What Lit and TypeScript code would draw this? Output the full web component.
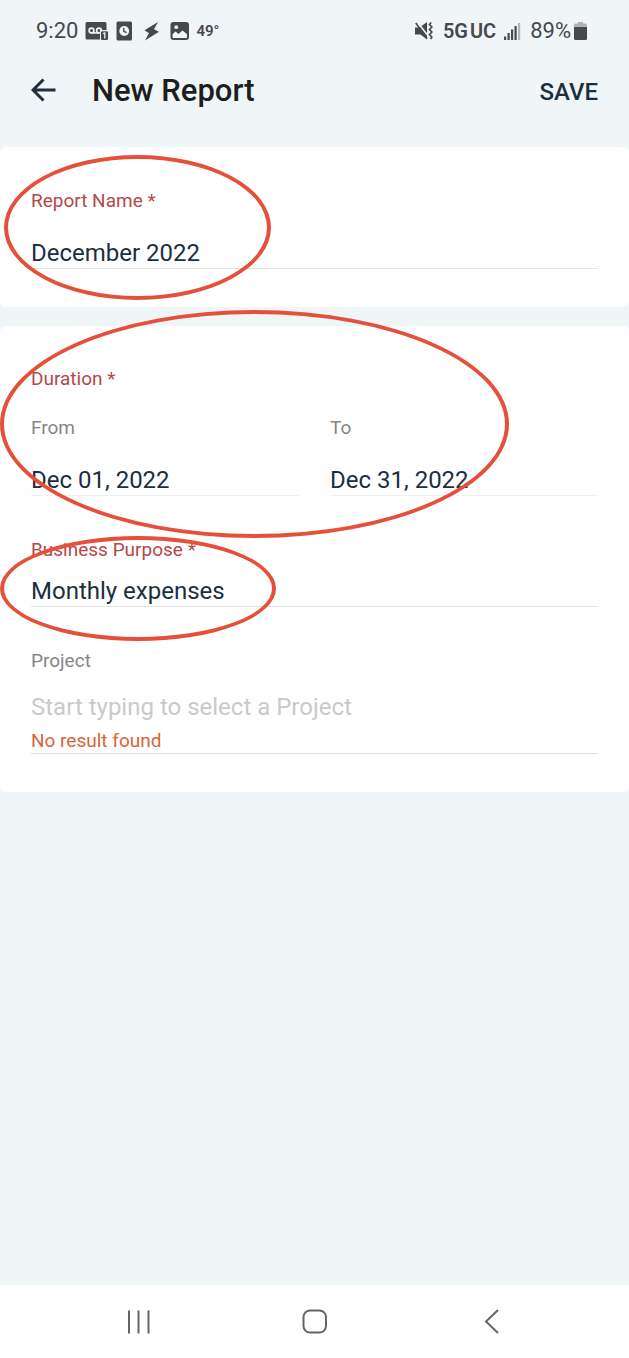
import { LitElement, html, css } from "lit";
import { customElement, state } from "lit/decorators.js";

const base = css`
  *,
  *::before,
  *::after {
    box-sizing: border-box;
  }
  svg {
    display: block;
    flex: none;
  }
  button {
    margin: 0;
    padding: 0;
    border: 0;
    background: none;
    color: inherit;
    font: inherit;
    cursor: pointer;
  }
`;

@customElement("status-bar")
class StatusBar extends LitElement {
  static styles = [
    base,
    css`
      :host {
        display: flex;
        justify-content: space-between;
        align-items: center;
        height: 62px;
        padding: 0 42px 0 36px;
        color: #48494b;
        font-size: 22px;
        line-height: 26px;
      }
      .side {
        display: flex;
        align-items: center;
      }
      .left {
        gap: 7px;
      }
      .right {
        gap: 8px;
      }
      .temp {
        font-size: 15px;
        font-weight: 600;
      }
      .network {
        display: flex;
        gap: 2px;
        font-size: 20px;
        font-weight: 600;
      }
      .battery {
        display: flex;
        align-items: center;
        gap: 3px;
      }
    `,
  ];

  render() {
    return html`
      <div class="side left">
        <span>9:20</span>
        <svg width="24" height="20" viewBox="0 0 24 20" aria-label="Voicemail">
          <path d="M2 1h18A1.500 1.500 0 0 1 21.500 2.500V9H15v9.500H2A1.500 1.500 0 0 1 .5 17V2.500A1.500 1.500 0 0 1 2 1z" fill="#48494b" />
          <g fill="none" stroke="#f0f5f8" stroke-width="1.600">
            <circle cx="6.500" cy="9.500" r="2.400" />
            <path d="M6.500 11.900h7.500" />
            <circle cx="14" cy="9.500" r="2.400" />
          </g>
          <rect x="15.500" y="9.800" width="8" height="9.700" rx="1.500" fill="#48494b" stroke="#f0f5f8" stroke-width="1" />
          <path d="M18 12.700l1.800-.8v5.600" fill="none" stroke="#f0f5f8" stroke-width="1.300" />
        </svg>
        <svg width="16" height="20" viewBox="0 0 16 20" aria-label="Alarm">
          <rect x="0.500" y="0.500" width="15.500" height="19" rx="1.500" fill="#48494b" />
          <circle cx="8.200" cy="10" r="4.900" fill="#f0f5f8" />
          <path d="M7.800 6.800v3.500l2.800 1.300" fill="none" stroke="#48494b" stroke-width="1.400" />
        </svg>
        <svg width="24" height="20" viewBox="0 0 24 20" aria-label="Charging">
          <path d="M19 1L5.500 9.200l4.500 3L6 19.500l14-8.700-5-2.600z" fill="#48494b" />
        </svg>
        <svg width="19" height="20" viewBox="0 0 19 20" aria-label="Picture">
          <rect x="1.500" y="2" width="16.500" height="16" rx="2" fill="none" stroke="#48494b" stroke-width="2" />
          <path d="M1.500 2h16.500v12l-5.500-4.500L8.500 13l-3-2.500-4 3.500z" fill="#48494b" />
          <circle cx="6.200" cy="6.200" r="1.900" fill="#f0f5f8" />
          <path d="M3 14.500l2.600-2 3 2.500 4.400-4.300 4 3.500v2.300H3z" fill="#f0f5f8" />
        </svg>
        <span class="temp">49°</span>
      </div>
      <div class="side right">
        <svg width="20" height="20" viewBox="0 0 20 20" aria-label="Vibrate">
          <path d="M0 6.500h4.500L12 1v17.500L5.500 13.500H0z" fill="#48494b" />
          <path d="M2 0.500L13.500 15.500" stroke="#f0f5f8" stroke-width="1.500" />
          <path d="M0.800 2L12 17.500" stroke="#48494b" stroke-width="1.600" />
          <path d="M16.200 1.500l-1.700 2 2.300 2.500-2.300 2.500 2.300 2.500-2.300 2.500 2.300 2.500-1.300 2" fill="none" stroke="#48494b" stroke-width="1.700" />
        </svg>
        <span class="network"><span>5G</span><span>UC</span></span>
        <svg width="18" height="20" viewBox="0 0 18 20" aria-label="Signal">
          <g fill="#48494b">
            <rect x="0" y="15.500" width="2.200" height="3.500" />
            <rect x="3.500" y="12" width="2.200" height="7" />
            <rect x="7" y="8.500" width="2.200" height="10.500" />
            <rect x="10.500" y="5" width="2.200" height="14" />
          </g>
          <rect x="14" y="2" width="2.200" height="17" fill="#b3b7ba" />
        </svg>
        <span class="battery">
          <span>89%</span>
          <svg width="13" height="20" viewBox="0 0 13 20" aria-label="Battery">
            <path d="M4 1h5v1.500h2.500A1.500 1.500 0 0 1 13 4v3H0V4a1.500 1.500 0 0 1 1.500-1.500H4z" fill="#b0b3b6" />
            <path d="M0 6h13v11.500A1.500 1.500 0 0 1 11.500 19h-10A1.500 1.500 0 0 1 0 17.500z" fill="#48494b" />
          </svg>
        </span>
      </div>
    `;
  }
}

@customElement("nav-bar")
class NavBar extends LitElement {
  static styles = [
    base,
    css`
      :host {
        display: flex;
        justify-content: center;
        padding: 0 50px;
        background: #fff;
      }
      button {
        flex: 1;
        display: flex;
        align-items: center;
        justify-content: center;
        height: 73px;
      }
      svg {
        fill: none;
        stroke: #636466;
        stroke-width: 2;
      }
    `,
  ];

  render() {
    return html`
      <button aria-label="Recent apps">
        <svg width="28" height="26" viewBox="0 0 28 26">
          <path d="M5 1.500v23M14.500 1.500v23M24.500 1.500v23" />
        </svg>
      </button>
      <button aria-label="Home">
        <svg width="28" height="26" viewBox="0 0 28 26">
          <rect x="3.500" y="1.500" width="22.500" height="22" rx="6.500" />
        </svg>
      </button>
      <button aria-label="Back">
        <svg width="28" height="26" viewBox="0 0 28 26">
          <path d="M21 1L9 12.500l12 11.500" />
        </svg>
      </button>
    `;
  }
}

@customElement("app-root")
class AppRoot extends LitElement {
  static styles = [
    base,
    css`
      :host {
        display: flex;
        flex-direction: column;
        min-height: 100vh;
        overflow-x: hidden;
        background: #f0f5f8;
        color: #1b2f3f;
        font-family: Roboto, "Liberation Sans", sans-serif;
      }
      .header {
        display: flex;
        align-items: center;
        height: 58px;
        padding: 0 31px;
      }
      .title {
        flex: 1;
        margin: 0 0 0 36px;
        color: #1c1e20;
        font-size: 31px;
        font-weight: 500;
        line-height: 36px;
      }
      .save {
        padding-top: 2px;
        font-size: 24px;
        font-weight: 500;
        line-height: 30px;
      }
      .form {
        display: flex;
        flex-direction: column;
        flex: 1;
        gap: 19px;
        padding: 27px 0;
      }
      .card {
        display: flex;
        flex-direction: column;
        gap: 42px;
        padding: 42px 31px 38px;
        border-radius: 6px;
        background: #fff;
      }
      .details {
        padding-top: 41px;
      }
      .group {
        position: relative;
        display: flex;
        flex-direction: column;
        min-width: 0;
        margin: 0;
        padding: 0;
        border: 0;
      }
      .label {
        display: block;
        padding: 0;
        color: #858688;
        font-size: 19px;
        line-height: 24px;
      }
      .required {
        color: #b4484a;
      }
      .control {
        display: block;
        width: 100%;
        height: 31px;
        margin: 25px 0 0;
        padding: 0;
        border: 0;
        border-bottom: 1px solid #e2e4e6;
        border-radius: 0;
        outline: 0;
        background: none;
        color: inherit;
        font: inherit;
        font-size: 24px;
        line-height: 30px;
      }
      .control::placeholder {
        color: #c9cacb;
        opacity: 1;
      }
      .near {
        margin-top: 14px;
      }
      .faint {
        border-bottom-color: #eff1f2;
      }
      .dates {
        display: grid;
        grid-template-columns: 1fr 1fr;
        gap: 31px;
        margin-top: 25px;
      }
      .lookup {
        display: flex;
        flex-direction: column;
        gap: 6px;
        margin-top: 19px;
        border-bottom: 1px solid #dcdee0;
      }
      .lookup .control {
        margin: 0;
        border-bottom-color: transparent;
      }
      .message {
        color: #d9633a;
        font-size: 19px;
        line-height: 24px;
      }
      .ring {
        position: absolute;
        z-index: 1;
        border: 4px solid #e5503a;
        border-radius: 50%;
        pointer-events: none;
      }
      .ring-name {
        left: -27px;
        top: -34px;
        width: 267px;
        height: 145px;
      }
      .ring-duration {
        left: -31px;
        top: -81px;
        width: 509px;
        height: 228px;
      }
      .ring-purpose {
        left: -31px;
        top: -2px;
        width: 276px;
        height: 105px;
      }
    `,
  ];

  @state() private name = "December 2022";
  @state() private purpose = "Monthly expenses";

  render() {
    return html`
      <status-bar></status-bar>
      <header class="header">
        <button aria-label="Back">
          <svg width="25" height="26" viewBox="0 0 25 26" fill="none" stroke="#1b2f3f" stroke-width="3">
            <path d="M24.500 12H2M12.500 1.500L2 12l10.500 10.500" />
          </svg>
        </button>
        <h1 class="title">New Report</h1>
        <button class="save">SAVE</button>
      </header>
      <main class="form">
        <section class="card">
          <div class="group">
            <label class="label required" for="name">Report Name *</label>
            <input class="control" id="name" .value=${this.name} />
            <span class="ring ring-name"></span>
          </div>
        </section>
        <section class="card details">
          <fieldset class="group">
            <legend class="label required">Duration *</legend>
            <div class="dates">
              <div class="group">
                <label class="label" for="from">From</label>
                <input class="control faint" id="from" value="Dec 01, 2022" />
              </div>
              <div class="group">
                <label class="label" for="to">To</label>
                <input class="control faint" id="to" value="Dec 31, 2022" />
              </div>
            </div>
            <span class="ring ring-duration"></span>
          </fieldset>
          <div class="group">
            <label class="label required" for="purpose">Business Purpose *</label>
            <input class="control near" id="purpose" .value=${this.purpose} />
            <span class="ring ring-purpose"></span>
          </div>
          <div class="group">
            <label class="label" for="project">Project</label>
            <div class="lookup">
              <input class="control" id="project" placeholder="Start typing to select a Project" />
              <span class="message">No result found</span>
            </div>
          </div>
        </section>
      </main>
      <nav-bar></nav-bar>
    `;
  }
}
